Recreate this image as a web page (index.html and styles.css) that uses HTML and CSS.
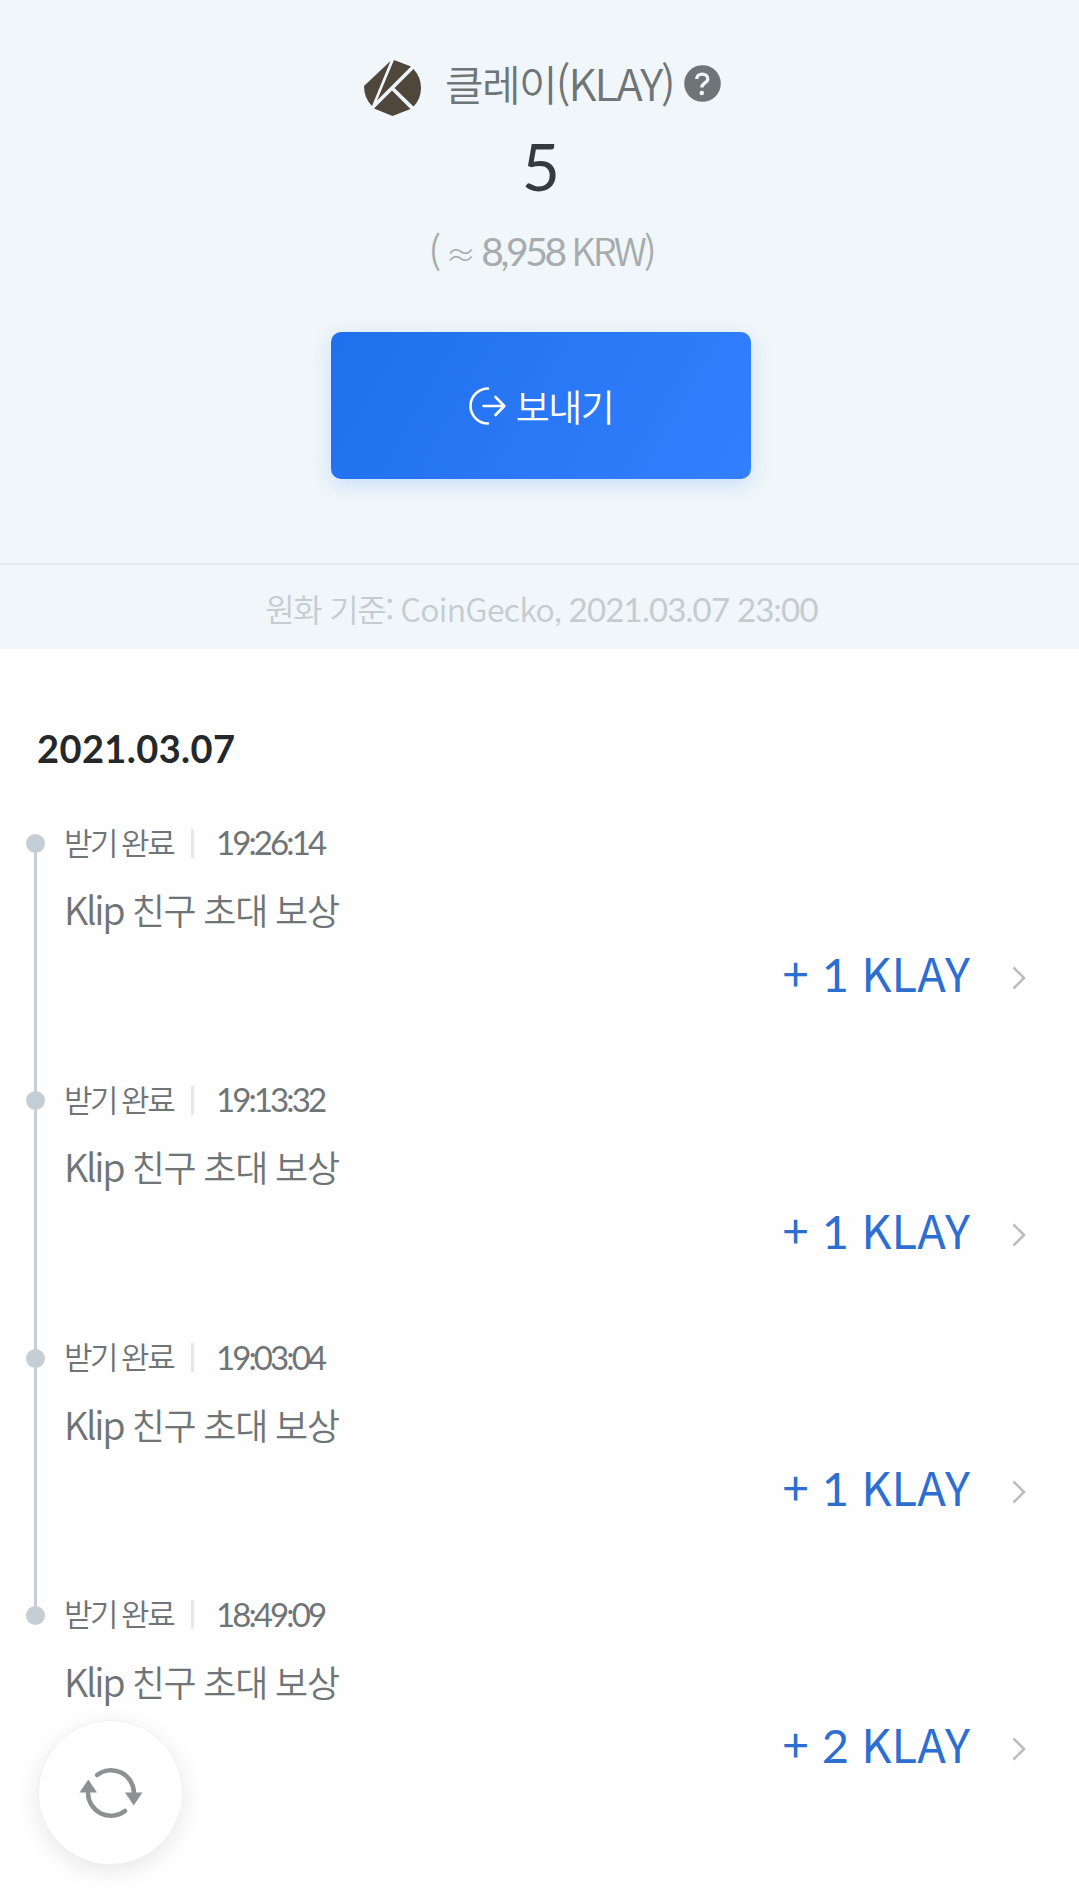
FILE: index.html
```html
<!DOCTYPE html>
<html lang="ko">
<head>
  <meta charset="UTF-8">
  <meta name="viewport" content="width=device-width, initial-scale=1.0">
  <title>클레이(KLAY)</title>
  <link rel="stylesheet" href="styles.css">
</head>
<body>
  <header class="summary">
    <div class="token">
      <svg class="token-logo" viewBox="0 0 57 56" width="57" height="56">
        <g fill="#4f463c">
          <path d="M26.500 1 L0 26 Q0 38 8 46 Z"/>
          <path d="M30 0 L47 6.500 L13 40.500 Z"/>
          <path d="M49.500 9 Q57 17 57 28 Q57 39 49.500 46.500 L30.500 28 Z"/>
          <path d="M28 30.500 L46.500 49 L28.500 56 L10 48.500 Z"/>
        </g>
      </svg>
      <span class="token-name"><span class="ko">클레이</span>(KLAY)</span>
      <svg class="help" viewBox="0 0 37 37" width="37" height="37">
        <circle cx="18.5" cy="18.5" r="18.3" fill="#6d7577"/>
        <path d="M12.7 14 C12.700 7.500 23.800 7.500 23.800 14 C23.800 18 17.800 17.800 17.800 22.500" fill="none" stroke="#f0f6fa" stroke-width="3.400"/>
        <circle cx="17.800" cy="28" r="2.300" fill="#f0f6fa"/>
      </svg>
    </div>
    <div class="balance">5</div>
    <div class="fiat">( <span class="approx">≈</span> <span class="num">8,958</span> KRW)</div>
    <button class="send" type="button">
      <svg viewBox="0 0 38 38" width="38" height="38" fill="none" stroke="#fff" stroke-width="2.600" stroke-linecap="round" stroke-linejoin="round">
        <path d="M19 1.500 A17.500 17.500 0 0 0 19 36.500"/>
        <path d="M14.500 19 H35 M26.500 10 L35.300 19 L26.500 28"/>
      </svg>
      <span>보내기</span>
    </button>
  </header>
  <div class="source"><span class="ko">원화 기준: </span>CoinGecko<span class="num">, 2021.03.07 23:00</span></div>

  <main class="history">
    <h2 class="date">2021.03.07</h2>
    <ul class="timeline">
      <li class="entry">
        <div class="meta"><span class="state">받기 완료</span><span class="time">19:26:14</span></div>
        <div class="title">Klip <span class="ko">친구 초대 보상</span></div>
        <div class="amount"><span>+ <span class="num">1</span> KLAY</span><svg class="chevron" viewBox="0 0 14 24" width="14" height="24"><path d="M1.500 1.500 L12 12 L1.500 22.500"/></svg></div>
      </li>
      <li class="entry">
        <div class="meta"><span class="state">받기 완료</span><span class="time">19:13:32</span></div>
        <div class="title">Klip <span class="ko">친구 초대 보상</span></div>
        <div class="amount"><span>+ <span class="num">1</span> KLAY</span><svg class="chevron" viewBox="0 0 14 24" width="14" height="24"><path d="M1.500 1.500 L12 12 L1.500 22.500"/></svg></div>
      </li>
      <li class="entry">
        <div class="meta"><span class="state">받기 완료</span><span class="time">19:03:04</span></div>
        <div class="title">Klip <span class="ko">친구 초대 보상</span></div>
        <div class="amount"><span>+ <span class="num">1</span> KLAY</span><svg class="chevron" viewBox="0 0 14 24" width="14" height="24"><path d="M1.500 1.500 L12 12 L1.500 22.500"/></svg></div>
      </li>
      <li class="entry">
        <div class="meta"><span class="state">받기 완료</span><span class="time">18:49:09</span></div>
        <div class="title">Klip <span class="ko">친구 초대 보상</span></div>
        <div class="amount"><span>+ <span class="num">2</span> KLAY</span><svg class="chevron" viewBox="0 0 14 24" width="14" height="24"><path d="M1.500 1.500 L12 12 L1.500 22.500"/></svg></div>
      </li>
    </ul>
  </main>

  <button class="refresh" type="button" aria-label="새로고침">
    <svg viewBox="0 0 64 52" width="64" height="52">
      <g fill="none" stroke="#8e9092" stroke-width="4.500" stroke-linecap="round">
        <path d="M18 8 A23 23 0 0 1 55 26"/>
        <path d="M46 44 A23 23 0 0 1 9 26"/>
      </g>
      <g fill="#8e9092">
        <path d="M46 25.500 H63.500 L54.700 38.500 Z"/>
        <path d="M0.500 25.500 H18 L9.300 12.500 Z"/>
      </g>
    </svg>
  </button>
</body>
</html>
```
FILE: styles.css
```css
* {
  box-sizing: border-box;
}

body {
  margin: 0;
  height: 1900px;
  overflow: hidden;
  background: #fefefe;
  color: #6f7476;
  font-family: "Noto Sans CJK KR", sans-serif;
  font-weight: 350;
}

button {
  border: 0;
  padding: 0;
  font-family: inherit;
  font-weight: 350;
}

.num {
  font-family: Lato, sans-serif;
  font-weight: 400;
}

.summary {
  display: flex;
  flex-direction: column;
  align-items: center;
  height: 563px;
  padding: 52px 0 0 3px;
  background: #f0f6f9;
}

.token {
  display: flex;
  align-items: center;
  width: 357px;
  height: 60px;
  margin-left: 3px;
}

.token-logo {
  margin-top: 12px;
}

.token-name {
  margin-left: 24px;
  font-size: 44px;
  letter-spacing: -2px;
  line-height: 60px;
  white-space: nowrap;
}

.token-name .ko {
  font-size: 42px;
  letter-spacing: -1.7px;
}

.help {
  margin: 2px 0 0 auto;
}

.balance {
  height: 90px;
  margin-top: 9px;
  color: #343b3e;
  font-family: Lato, sans-serif;
  font-size: 66px;
  font-weight: 400;
  line-height: 90px;
}

.fiat {
  height: 56px;
  margin-top: 11px;
  color: #a6acae;
  font-size: 38px;
  letter-spacing: -3px;
  line-height: 56px;
  white-space: pre;
}

.fiat .num {
  font-size: 39px;
  letter-spacing: -3.4px;
}

.approx {
  margin: 0 1px 0 0;
  font-size: 30px;
  font-weight: 300;
}

.send {
  display: flex;
  align-items: center;
  justify-content: center;
  gap: 9px;
  flex: none;
  width: 420px;
  height: 147px;
  margin-top: 54px;
  border-radius: 10px;
  background: linear-gradient(120deg, #206fec, #3280ff);
  box-shadow: 0 6px 20px rgba(50, 128, 255, 0.2);
  color: #fff;
  font-size: 37px;
  letter-spacing: -1.5px;
}

.source {
  height: 86px;
  padding-left: 4px;
  border-top: 2px solid #e2e8eb;
  background: #f0f6f9;
  color: #c4ccd0;
  font-size: 32px;
  letter-spacing: -0.6px;
  line-height: 87px;
  text-align: center;
}

.source .ko {
  letter-spacing: -1.3px;
}

.source .num {
  font-size: 33px;
  letter-spacing: -0.8px;
}

.history {
  padding: 71px 52px 0 26px;
}

.date {
  margin: 0;
  padding-left: 11px;
  color: #24282b;
  font-family: Lato, sans-serif;
  font-size: 38px;
  font-weight: 700;
  letter-spacing: 0.4px;
  line-height: 56px;
}

.timeline {
  margin: 43px 0 0;
  padding: 0;
  list-style: none;
}

.entry {
  position: relative;
  height: 257.3px;
  padding-left: 38px;
}

/* connector to the next dot */
.entry:not(:last-child)::before {
  content: "";
  position: absolute;
  top: 24px;
  left: 8px;
  width: 3px;
  height: 100%;
  background: #c5ced4;
}

.entry::after {
  content: "";
  position: absolute;
  top: 15px;
  left: 0;
  width: 19px;
  height: 19px;
  border-radius: 50%;
  background: #c5ced4;
}

.meta {
  display: flex;
  align-items: center;
  height: 48px;
}

.state {
  width: 130px;
  border-right: 3px solid #e2e8eb;
  font-size: 31px;
  letter-spacing: -2.4px;
  word-spacing: -1.5px;
  line-height: 26px;
  padding-bottom: 3px;
  white-space: nowrap;
}

.time {
  margin-left: 22px;
  padding-bottom: 2px;
  font-family: Lato, sans-serif;
  font-size: 33px;
  font-weight: 400;
  letter-spacing: -2.9px;
}

.title {
  height: 56px;
  margin-top: 14px;
  font-size: 38px;
  letter-spacing: -2.3px;
  line-height: 56px;
}

.title .ko {
  font-size: 36px;
  letter-spacing: -1.2px;
  word-spacing: -1px;
}

.amount {
  display: flex;
  align-items: center;
  justify-content: flex-end;
  height: 60px;
  margin-top: 4px;
  color: #2c6fd1;
  font-size: 47px;
  font-weight: 400;
}

.amount .num {
  margin-right: -1px;
}

.chevron {
  margin: 13px 1px 0 42px;
  fill: none;
  stroke: #bcbcbe;
  stroke-width: 2.6;
}

.refresh {
  position: fixed;
  bottom: 35px;
  left: 38px;
  display: flex;
  align-items: center;
  justify-content: center;
  width: 145px;
  height: 145px;
  border: 1px solid #eff0f1;
  border-radius: 50%;
  background: #fff;
  box-shadow: 0 6px 22px rgba(0, 0, 0, 0.09);
}
```
